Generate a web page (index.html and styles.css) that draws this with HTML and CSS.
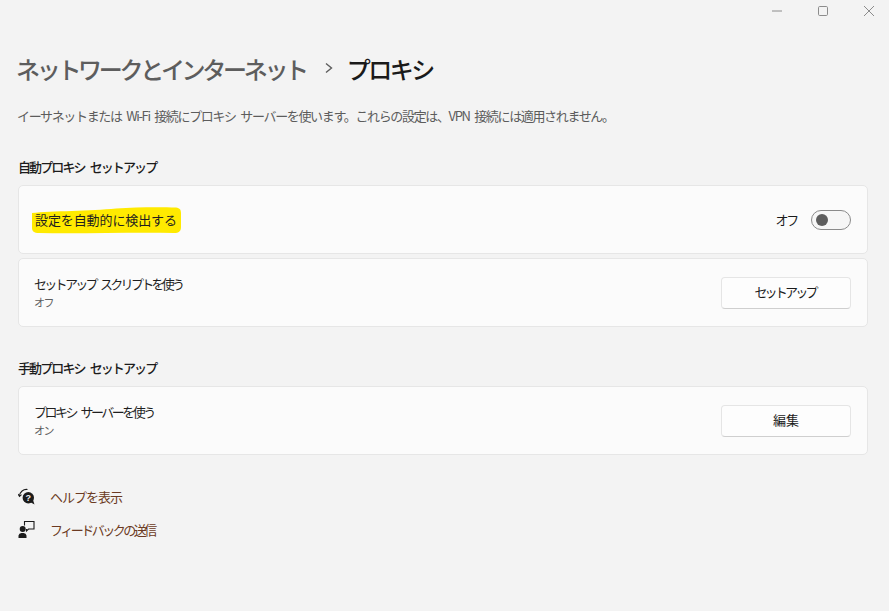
FILE: index.html
```html
<!DOCTYPE html>
<html lang="ja">
<head>
    <meta charset="UTF-8">
    <meta name="viewport" content="width=device-width, initial-scale=1.0">
    <title>プロキシ</title>
    <link rel="stylesheet" href="styles.css">
</head>
<body>
    <div class="titlebar">
        <svg class="win-icon" width="12" height="12" viewBox="0 0 12 12"><path d="M1 6h10" /></svg>
        <svg class="win-icon" width="12" height="12" viewBox="0 0 12 12"><rect x="1.5" y="1.5" width="9" height="9" rx="1.2" /></svg>
        <svg class="win-icon" width="12" height="12" viewBox="0 0 12 12"><path d="M1 1l10 10M11 1L1 11" /></svg>
    </div>
    <div class="content">
        <div class="page-title">
            <span class="crumb">ネットワークとインターネット</span>
            <svg class="crumb-sep" width="10" height="14" viewBox="0 0 10 14"><path d="M2 2.500l5.500 4.500L2 11.500" /></svg>
            <span class="current">プロキシ</span>
        </div>
        <p class="desc">イーサネットまたは Wi-Fi 接続にプロキシ サーバーを使います。これらの設定は、VPN 接続には適用されません。</p>

        <h2 class="section first">自動プロキシ セットアップ</h2>
        <div class="card">
            <div class="card-text">
                <span class="marked">
                    <svg class="marker" width="151" height="27" viewBox="0 0 151 27"><path d="M1 6C20 4 60 4 85 1.500C105 0 130 0 145 .5C149 1 150 3 150 6V20C150 24 148 26 143 26C100 25 50 27 8 26C3 26 1 24 1 21z" /></svg>
                    <span class="marked-text">設定を自動的に検出する</span>
                </span>
            </div>
            <div class="toggle-wrap">
                <span class="toggle-label">オフ</span>
                <span class="toggle"><span class="knob"></span></span>
            </div>
        </div>
        <div class="card">
            <div class="card-text">
                <div class="kana script-label">セットアップ スクリプトを使う</div>
                <div class="sub">オフ</div>
            </div>
            <button class="btn kana-btn">セットアップ</button>
        </div>

        <h2 class="section second">手動プロキシ セットアップ</h2>
        <div class="card">
            <div class="card-text">
                <div class="kana server-label">プロキシ サーバーを使う</div>
                <div class="sub">オン</div>
            </div>
            <button class="btn">編集</button>
        </div>

        <div class="links">
            <div class="link">
                <svg width="18" height="18" viewBox="0 0 18 18">
                    <path class="line" d="M1.500 9A7 7 0 0 1 9.500 2.500" />
                    <path class="line" d="M0 7l1.500 2.500 2-1.800" />
                    <circle class="fill" cx="10.300" cy="10.800" r="5.700" />
                    <path class="fill" d="M12 15l4.500 2.500-1.500-4.500z" />
                    <text class="q" x="10.300" y="14" text-anchor="middle">?</text>
                </svg>
                <a class="help">ヘルプを表示</a>
            </div>
            <div class="link">
                <svg width="18" height="18" viewBox="0 0 18 18">
                    <path class="line" d="M6.500 5.500V1.500h9.500v7.500h-5.500l-2 2V9" />
                    <circle class="fill" cx="4.700" cy="9" r="3" />
                    <path class="fill" d="M0.500 18v-2.500a3 3 0 0 1 3-2.500h2a3 3 0 0 1 3 2.500V18z" />
                </svg>
                <a class="feedback">フィードバックの送信</a>
            </div>
        </div>
    </div>
</body>
</html>
```
FILE: styles.css
```css
body {
    font-family: 'Noto Sans CJK JP', 'Open Sans', sans-serif;
    background-color: #f3f3f3;
    color: #1b1b1b;
    margin: 0;
    padding: 0;
    font-size: 13px;
    height: 611px;
    overflow: hidden;
}
.titlebar {
    display: flex;
    justify-content: flex-end;
    align-items: center;
    gap: 34px;
    height: 22px;
    padding-right: 14px;
}
.win-icon {
    fill: none;
    stroke: #8c8c8c;
    stroke-width: 1;
}
.content {
    padding: 0 21px 0 18px;
}
.page-title {
    display: flex;
    align-items: center;
    height: 40px;
    margin-top: 26px;
    margin-left: -2px;
    font-size: 24px;
    font-weight: 500;
    letter-spacing: -3.3px;
}
.crumb {
    color: #5d5d5d;
}
.crumb-sep {
    margin: 0 13px 0 18px;
    fill: none;
    stroke: #5d5d5d;
    stroke-width: 1.4;
}
.current {
    color: #1a1a1a;
    letter-spacing: -2.500px;
}
.desc {
    margin: 18px 0 0 -1px;
    font-size: 13px;
    line-height: 20px;
    color: #5c5c5c;
    letter-spacing: -1.350px;
    word-spacing: 3px;
}
.section {
    margin: 0 0 8px 0;
    font-size: 13px;
    line-height: 20px;
    font-weight: 500;
    letter-spacing: -1.900px;
    word-spacing: 4px;
}
.section.first {
    margin-top: 31px;
}
.section.second {
    margin-top: 31px;
}
.card {
    display: flex;
    justify-content: space-between;
    align-items: center;
    box-sizing: border-box;
    height: 69px;
    margin-bottom: 4px;
    padding: 0 16px;
    background-color: #fbfbfb;
    border: 1px solid #e6e6e6;
    border-radius: 5px;
}
.card-text {
    line-height: 18px;
    color: #1f1f1f;
}
.kana {
    margin-left: -1px;
    word-spacing: 4px;
}
.script-label {
    letter-spacing: -2.700px;
}
.server-label {
    letter-spacing: -2.500px;
}
.sub {
    margin: 2px 0 0 -1px;
    font-size: 11px;
    line-height: 15px;
    letter-spacing: -1.500px;
    color: #5f5f5f;
}
.marked {
    position: relative;
    display: inline-block;
}
.marker {
    position: absolute;
    left: -4px;
    top: -4px;
    fill: #ffea00;
}
.marked-text {
    position: relative;
    letter-spacing: -0.1px;
}
.toggle-wrap {
    display: flex;
    align-items: center;
    gap: 14px;
    font-size: 13px;
}
.toggle-label {
    letter-spacing: -2.200px;
}
.toggle {
    display: flex;
    align-items: center;
    box-sizing: border-box;
    width: 40px;
    height: 20px;
    padding-left: 4px;
    background-color: #f6f6f6;
    border: 1px solid #8a8a8a;
    border-radius: 10px;
}
.knob {
    width: 12px;
    height: 12px;
    background-color: #5d5d5d;
    border-radius: 50%;
}
.btn {
    width: 130px;
    height: 32px;
    padding-bottom: 3px;
    font-family: inherit;
    font-size: 13px;
    color: #1b1b1b;
    background-color: #fdfdfd;
    border: 1px solid #e5e5e5;
    border-bottom-color: #cfcfcf;
    border-radius: 4px;
}
.kana-btn {
    padding-right: 8px;
    letter-spacing: -2.800px;
}
.links {
    display: flex;
    flex-direction: column;
    gap: 15px;
    margin-top: 32px;
}
.link {
    display: flex;
    align-items: center;
    gap: 14px;
    height: 18px;
}
.link a {
    color: #6b3a22;
}
.help {
    letter-spacing: -1px;
}
.feedback {
    letter-spacing: -2.500px;
}
.line {
    fill: none;
    stroke: #1b1b1b;
    stroke-width: 1.1;
}
.fill {
    fill: #1b1b1b;
}
.q {
    fill: #f3f3f3;
    font-family: 'Liberation Sans', sans-serif;
    font-size: 9px;
    font-weight: 700;
}
```
